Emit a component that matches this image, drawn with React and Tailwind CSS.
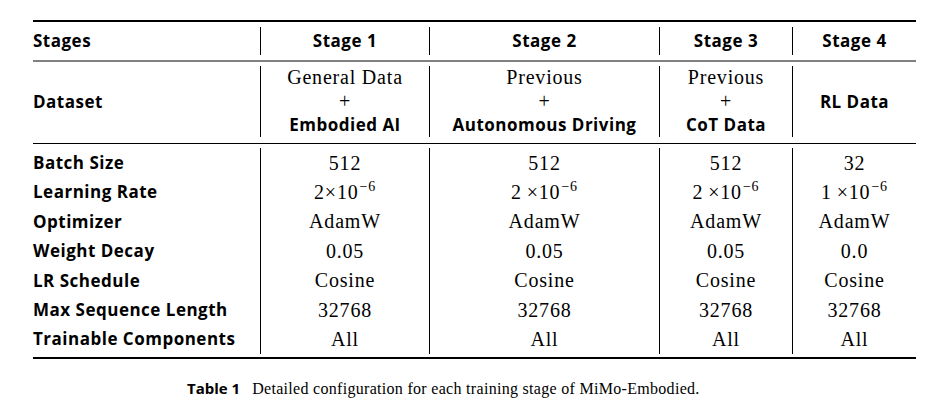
import React from "react";

const sans = "font-['Open_Sans','Liberation_Sans',sans-serif] tracking-[0.5px]";
const serif = "font-['Liberation_Serif','DejaVu_Serif',serif] tracking-[0.8px]";

const cols = "grid grid-cols-[227px_169px_230px_133px_124px]";

const Sci = ({ m, gap }) => (
  <span className="whitespace-nowrap">
    {m}
    {gap ? "\u2009" : ""}×10
    <span className="text-[14px] relative -top-[8px] ml-[1px]">−6</span>
  </span>
);

const rows = [
  ["Batch Size", "512", "512", "512", "32"],
  ["Learning Rate", <Sci m="2" />, <Sci m="2" gap />, <Sci m="2" gap />, <Sci m="1" gap />],
  ["Optimizer", "AdamW", "AdamW", "AdamW", "AdamW"],
  ["Weight Decay", "0.05", "0.05", "0.05", "0.0"],
  ["LR Schedule", "Cosine", "Cosine", "Cosine", "Cosine"],
  ["Max Sequence Length", "32768", "32768", "32768", "32768"],
  ["Trainable Components", "All", "All", "All", "All"],
];

const datasets = [
  ["General Data", "Embodied AI"],
  ["Previous", "Autonomous Driving"],
  ["Previous", "CoT Data"],
];

export default function App() {
  return (
    <div className="w-[933px] h-[413px] bg-white text-black pt-[20px]">
      <div className="ml-[33px] w-[883px]">
        {/* top rule */}
        <div className="h-[2px] bg-black" />

        {/* header */}
        <div className={`${cols} h-[28px] mt-[5px] items-center text-[17px] font-bold ${sans}`}>
          <div>Stages</div>
          {["Stage 1", "Stage 2", "Stage 3", "Stage 4"].map((s) => (
            <div key={s} className="h-full flex items-center justify-center border-l border-black">
              {s}
            </div>
          ))}
        </div>
        <div className="h-[2px] bg-[#808080] mt-[5px]" />

        {/* dataset */}
        <div className={`${cols} h-[71px] mt-[4px]`}>
          <div className={`flex items-center text-[17px] font-bold ${sans}`}>Dataset</div>
          {datasets.map(([a, b], i) => (
            <div key={i} className="flex flex-col items-center justify-between border-l border-black leading-[23px] pb-[1px]">
              <div className={`${serif} text-[20px]`}>{a}</div>
              <div className={`${serif} text-[20px]`}>+</div>
              <div className={`${sans} text-[17px] font-bold`}>{b}</div>
            </div>
          ))}
          <div className={`flex items-center justify-center border-l border-black text-[17px] font-bold ${sans}`}>
            RL Data
          </div>
        </div>
        <div className="h-[1px] bg-black mt-[6px]" />

        {/* body */}
        <div className={`${cols} mt-[4px]`}>
          {rows.map((r, i) => (
            <React.Fragment key={i}>
              <div className={`h-[29.4px] flex items-center text-[17px] font-bold ${sans}`}>{r[0]}</div>
              {r.slice(1).map((v, j) => (
                <div key={j} className={`h-[29.4px] flex items-center justify-center border-l border-black text-[20px] ${serif}`}>
                  {v}
                </div>
              ))}
            </React.Fragment>
          ))}
        </div>
        <div className="h-[2px] bg-black mt-[3px]" />
      </div>

      {/* caption */}
      <div className="mt-[18px] pl-[187px] flex items-baseline gap-[12px]">
        <span className="font-['Open_Sans','Liberation_Sans',sans-serif] font-bold text-[15px]">Table 1</span>
        <span className="font-['Liberation_Serif','DejaVu_Serif',serif] tracking-[0.3px] text-[16px]">
          Detailed configuration for each training stage of MiMo-Embodied.
        </span>
      </div>
    </div>
  );
}
